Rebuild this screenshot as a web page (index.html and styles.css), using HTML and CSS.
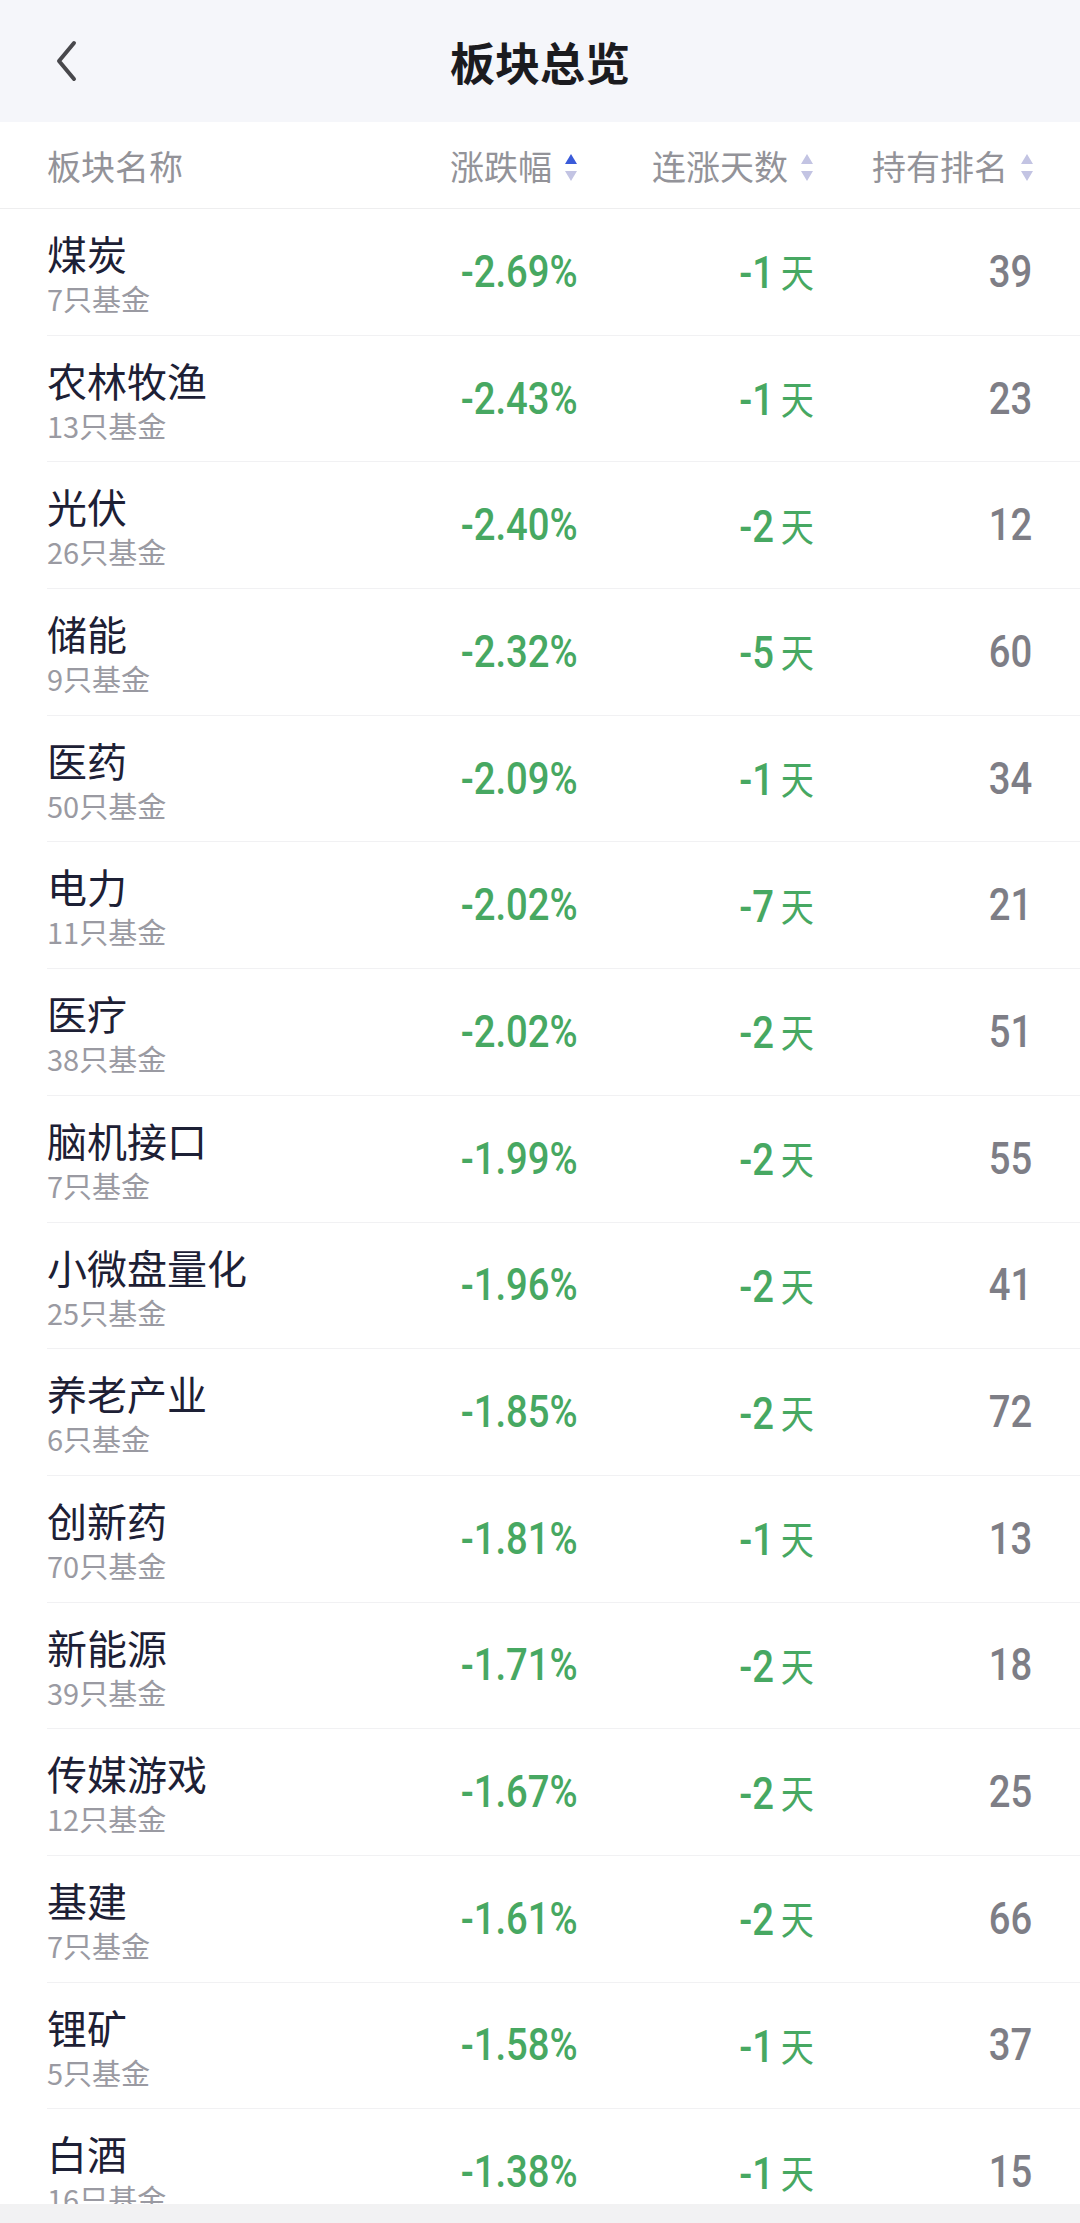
FILE: index.html
```html
<!DOCTYPE html>
<html lang="zh-CN">
<head>
  <meta charset="UTF-8">
  <meta name="viewport" content="width=device-width, initial-scale=1.0">
  <title>板块总览</title>
  <link rel="stylesheet" href="styles.css">
</head>
<body>
  <div class="page">
    <header class="topbar">
      <span class="back">
        <svg width="30" height="44" viewBox="0 0 30 44">
          <path d="M22 4 L7 22 L22 40" fill="none" stroke="#48484c" stroke-width="4" stroke-linecap="round" stroke-linejoin="round"/>
        </svg>
      </span>
      <h1>板块总览</h1>
    </header>

    <div class="thead">
      <span class="th-name">板块名称</span>
      <span class="th">涨跌幅
        <svg class="sort" width="14" height="32" viewBox="0 0 14 32">
          <path d="M7 4 L13 14 L1 14 Z" fill="#3a5bd9"/>
          <path d="M1 21 L13 21 L7 31 Z" fill="#c3c4e3"/>
        </svg>
      </span>
      <span class="th">连涨天数
        <svg class="sort" width="14" height="32" viewBox="0 0 14 32">
          <path d="M7 4 L13 14 L1 14 Z" fill="#c3c4e3"/>
          <path d="M1 21 L13 21 L7 31 Z" fill="#c3c4e3"/>
        </svg>
      </span>
      <span class="th">持有排名
        <svg class="sort" width="14" height="32" viewBox="0 0 14 32">
          <path d="M7 4 L13 14 L1 14 Z" fill="#c3c4e3"/>
          <path d="M1 21 L13 21 L7 31 Z" fill="#c3c4e3"/>
        </svg>
      </span>
    </div>

    <div class="list" id="list"></div>

    <div class="navbar"></div>
  </div>

  <script>
    const sectors = [
      ['煤炭', 7, '-2.69%', -1, 39],
      ['农林牧渔', 13, '-2.43%', -1, 23],
      ['光伏', 26, '-2.40%', -2, 12],
      ['储能', 9, '-2.32%', -5, 60],
      ['医药', 50, '-2.09%', -1, 34],
      ['电力', 11, '-2.02%', -7, 21],
      ['医疗', 38, '-2.02%', -2, 51],
      ['脑机接口', 7, '-1.99%', -2, 55],
      ['小微盘量化', 25, '-1.96%', -2, 41],
      ['养老产业', 6, '-1.85%', -2, 72],
      ['创新药', 70, '-1.81%', -1, 13],
      ['新能源', 39, '-1.71%', -2, 18],
      ['传媒游戏', 12, '-1.67%', -2, 25],
      ['基建', 7, '-1.61%', -2, 66],
      ['锂矿', 5, '-1.58%', -1, 37],
      ['白酒', 16, '-1.38%', -1, 15]
    ];

    const list = document.getElementById('list');
    list.innerHTML = sectors.map(s => `
      <div class="row">
        <div class="name">
          <div class="title">${s[0]}</div>
          <div class="count">${s[1]}只基金</div>
        </div>
        <div class="cell"><span class="num down">${s[2]}</span></div>
        <div class="cell"><span class="num down">${s[3]}<span class="unit">天</span></span></div>
        <div class="cell"><span class="num rank">${s[4]}</span></div>
      </div>`).join('');
  </script>
</body>
</html>
```

FILE: styles.css
```css
body {
  margin: 0;
  font-family: "Noto Sans CJK SC", "Noto Sans", sans-serif;
  background: #ffffff;
}
.page {
  height: 2223px;
  display: flex;
  flex-direction: column;
  overflow: hidden;
}
.topbar {
  height: 122px;
  flex: none;
  background: #f5f6fa;
  display: flex;
  align-items: center;
  justify-content: center;
  position: relative;
}
.topbar h1 {
  margin: 0;
  font-size: 45px;
  font-weight: 700;
  color: #1b1b1f;
  line-height: 1;
}
.back {
  position: absolute;
  left: 52px;
  top: 39px;
  display: flex;
}
.thead {
  height: 86px;
  flex: none;
  border-bottom: 1px solid #eeeeef;
  display: grid;
  grid-template-columns: 1fr 200px 236px 220px;
  align-items: center;
  padding: 0 46px 0 47px;
  font-size: 34px;
  color: #939399;
}
.th {
  display: flex;
  align-items: center;
  justify-content: flex-end;
}
.sort {
  margin-left: 12px;
  margin-top: 2px;
}
.list {
  flex: 1;
  overflow: hidden;
}
.row {
  height: 125.7px;
  margin-left: 47px;
  padding-right: 46px;
  border-bottom: 1px solid #f1f1f3;
  display: grid;
  grid-template-columns: 1fr 200px 236px 220px;
  align-items: center;
}
.name {
  align-self: start;
  padding-top: 21px;
}
.title {
  font-size: 40px;
  line-height: 46px;
  color: #1d2035;
}
.count {
  margin-top: 4px;
  font-size: 29px;
  line-height: 36px;
  color: #9a9aa2;
}
.cell {
  text-align: right;
}
.num {
  display: inline-block;
  font-family: Roboto, "Noto Sans CJK SC", sans-serif;
  font-size: 45px;
  font-weight: 500;
  line-height: 52px;
  transform: scaleX(0.85);
  transform-origin: right center;
}
.down {
  color: #47a862;
}
.rank {
  color: #7e7e86;
  margin-right: 2px;
}
.unit {
  font-family: "Noto Sans CJK SC", sans-serif;
  font-size: 39px;
  font-weight: 400;
  margin-left: 8px;
  vertical-align: 1px;
}
.navbar {
  height: 19px;
  flex: none;
  background: #f2f2f3;
}
```
